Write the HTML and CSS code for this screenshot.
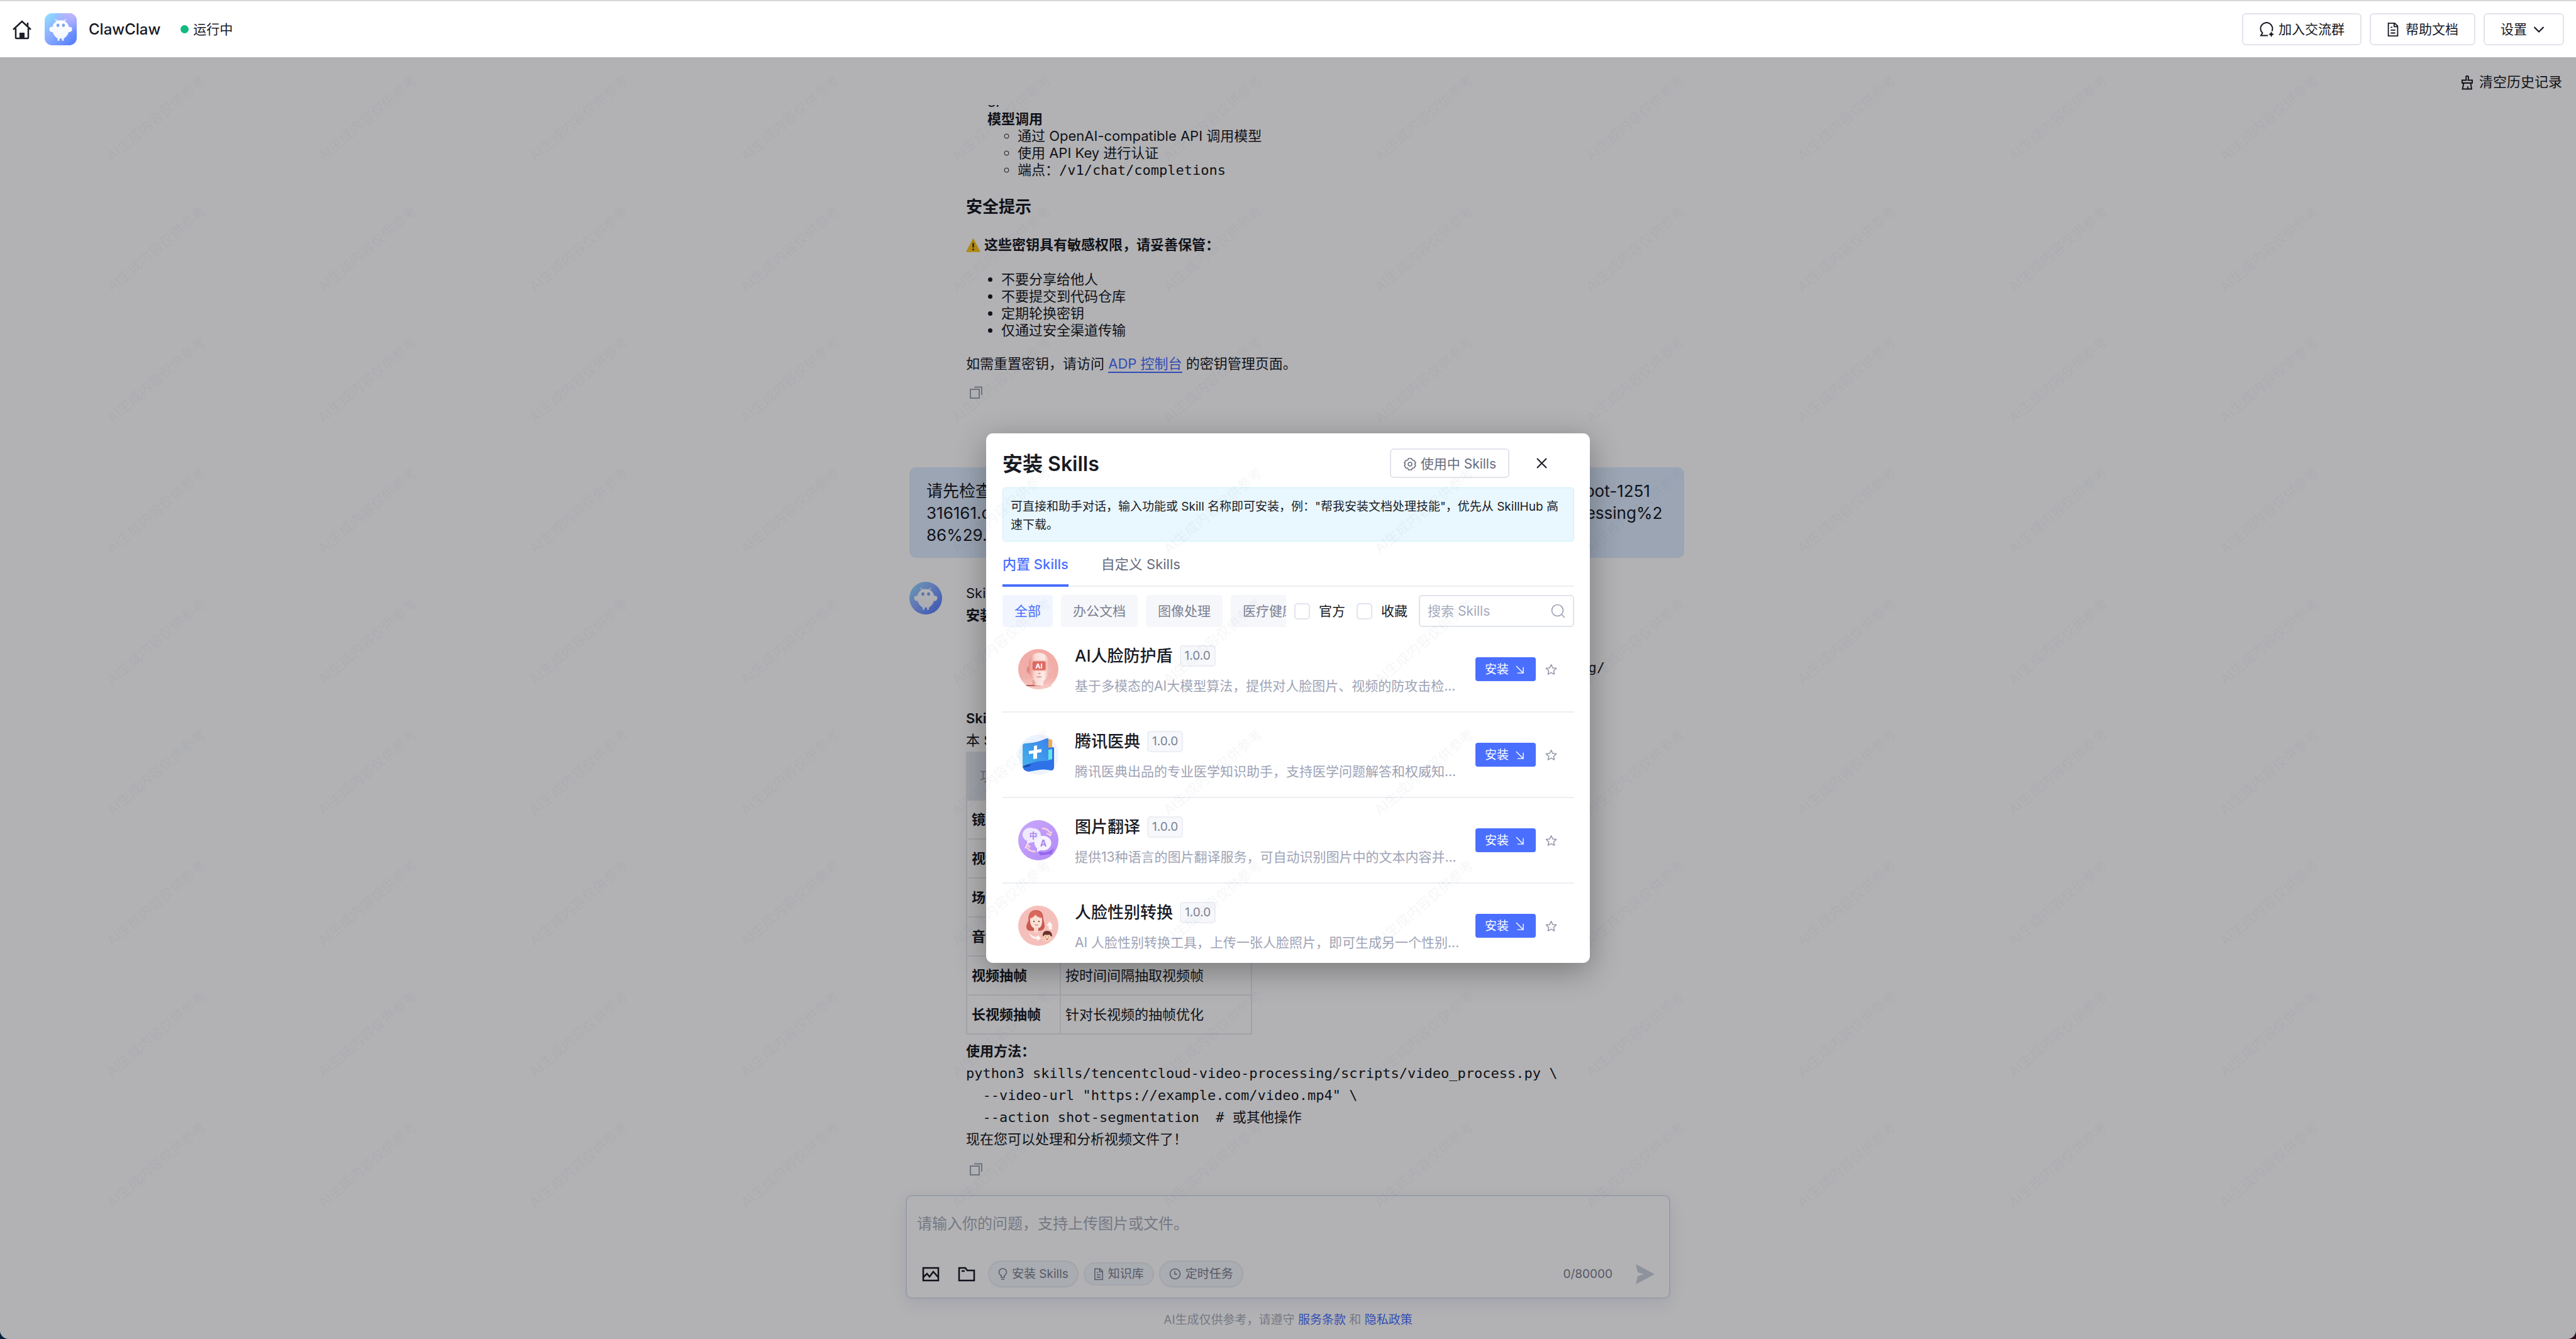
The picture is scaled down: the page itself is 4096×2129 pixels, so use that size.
FILE: index.html
```html
<!DOCTYPE html>
<html lang="zh-CN">
<head>
<meta charset="utf-8">
<title>ClawClaw</title>
<link rel="stylesheet" href="styles.css">
</head>
<body>
<svg class="defs" aria-hidden="true">
  <defs>
    <linearGradient id="logoBg" x1="0" y1="0" x2="1" y2="1"><stop offset="0" stop-color="#8fe3ff"/><stop offset=".4" stop-color="#8fb0ff"/><stop offset="1" stop-color="#4f78ff"/></linearGradient>
    <radialGradient id="logoTint" cx=".85" cy="0" r=".6"><stop offset="0" stop-color="#c3b4ff"/><stop offset="1" stop-color="#c3b4ff" stop-opacity="0"/></radialGradient>
    <linearGradient id="logoBody" x1="0" y1="0" x2="0" y2="1"><stop offset="0" stop-color="#fff"/><stop offset="1" stop-color="#f1f6ff"/></linearGradient>
    <linearGradient id="coral" x1="0" y1="0" x2="0" y2="1"><stop offset="0" stop-color="#f3aba6"/><stop offset=".7" stop-color="#f1b0aa"/><stop offset="1" stop-color="#f8cfc9"/></linearGradient>
    <linearGradient id="skin" x1="0" y1="0" x2="1" y2="0"><stop offset="0" stop-color="#e58d83"/><stop offset=".3" stop-color="#f9d9d3"/><stop offset=".75" stop-color="#fcece8"/><stop offset="1" stop-color="#eeb0a8"/></linearGradient>
    <linearGradient id="book" x1="0" y1="1" x2="1" y2="0"><stop offset="0" stop-color="#45b4ea"/><stop offset="1" stop-color="#3b82ee"/></linearGradient>
    <linearGradient id="violet" x1="0" y1="0" x2="1" y2="1"><stop offset="0" stop-color="#c9a8fb"/><stop offset="1" stop-color="#b18bf7"/></linearGradient>
    <symbol id="bot" viewBox="0 0 52 52">
      <path d="M17 10l5 3M35 10l-5 3" stroke="#e6f1ff" stroke-width="1.5" fill="none"/>
      <path d="M26 11.500c8 0 12 5 13.500 11 3-1 5 .5 5 3.500s-2.500 5-5.500 4.500c-1.500 5-5 8.500-8 10.500v3.500h-3V41h-4v3.500h-3V41c-3-2-6.500-5.500-8-10.500-3 .5-5.500-1.500-5.500-4.500s2-4.500 5-3.500c1.500-6 5.500-11 13.500-11z" fill="url(#logoBody)"/>
      <ellipse cx="21.500" cy="19.500" rx="2.300" ry="2.800" fill="#7ea6f5"/><ellipse cx="30.500" cy="19.500" rx="2.300" ry="2.800" fill="#7ea6f5"/>
    </symbol>
    <symbol id="copy" viewBox="0 0 20 20"><path d="M1 5h14v14H1zM7 1.500h12V14" fill="none" stroke="currentColor" stroke-width="2"/></symbol>
    <symbol id="doc" viewBox="0 0 20 26"><path d="M2 2h11l5 5v17H2zM12 2v6h6M6 9h3M6 14h8M6 19h8" fill="none" stroke="currentColor" stroke-width="2"/></symbol>
    <symbol id="arrow" viewBox="0 0 14 14"><path d="M1 1l11 11M13 3v10H3" fill="none" stroke="currentColor" stroke-width="1.500"/></symbol>
    <symbol id="star" viewBox="0 0 20 20"><path d="M10 1.800l2.500 5.500 6 .7-4.400 4.100 1.200 5.900L10 15.100 4.700 18l1.200-5.900L1.500 8l6-.7z" fill="none" stroke="currentColor" stroke-width="1.600" stroke-linejoin="round"/></symbol>
  </defs>
</svg>

<div class="app">
  <header class="topbar">
    <a class="home" href="#" aria-label="首页"><svg width="32" height="32" viewBox="0 0 32 32"><path d="M2 16L16 3l14 13M6 14v15q0 1 1 1h18q1 0 1-1V14M25 11V5" fill="none" stroke="#1b1d2a" stroke-width="2.500"/><path d="M12 30v-9h8v9z" fill="#1b1d2a"/></svg></a>
    <svg class="logo" width="51" height="51" viewBox="0 0 52 52"><rect width="52" height="52" rx="12" fill="url(#logoBg)"/><rect width="52" height="52" rx="12" fill="url(#logoTint)"/><use href="#bot"/></svg>
    <h1 class="brand">ClawClaw</h1>
    <span class="status"><i class="dot"></i>运行中</span>
    <nav class="top-actions">
      <button class="btn wide"><svg width="24" height="24" viewBox="0 0 24 24"><path d="M14 21.500H3l2.500-4A9.500 9.500 0 1 1 20.500 14.500" fill="none" stroke="currentColor" stroke-width="2"/><path d="M19.500 15l1.500 3 3 1.500-3 1.500-1.500 3-1.500-3-3-1.500 3-1.500z" fill="currentColor"/></svg>加入交流群</button>
      <button class="btn"><svg width="20" height="24"><use href="#doc"/></svg>帮助文档</button>
      <button class="btn tight">设置<svg width="18" height="12" viewBox="0 0 18 12"><path d="M1.500 2L9 9.500 16.500 2" fill="none" stroke="currentColor" stroke-width="2.200"/></svg></button>
    </nav>
  </header>

  <main class="stage">
    <div class="history-bar"><button class="clear"><svg width="18" height="25" viewBox="0 0 18 25"><path d="M7.500 9.500L7 4a2.200 2.200 0 0 1 4 0l-.5 5.500H17V14H1V9.500zM3.500 14L1.500 23.500H16L14.500 14M10 19.500v4" fill="none" stroke="currentColor" stroke-width="1.900"/></svg>清空历史记录</button></div>

    <div class="thread">
      <div class="thread-col">
        <article class="answer">
          <div class="numbered">3.</div>
          <div class="numbered"><b>模型调用</b></div>
          <ul class="circles"><li>通过 OpenAI-compatible API 调用模型</li><li>使用 API Key 进行认证</li><li>端点：<code>/v1/chat/completions</code></li></ul>
          <h3>安全提示</h3>
          <p class="warn"><svg width="23" height="22" viewBox="0 0 23 22"><path d="M11.500 1L22 21H1z" fill="#fdc419" stroke="#fdc419" stroke-width="1.500" stroke-linejoin="round"/><path d="M11.500 7.500v7M11.500 16.500v2.500" stroke="#222" stroke-width="2.200"/></svg><b>这些密钥具有敏感权限，请妥善保管：</b></p>
          <ul class="discs"><li>不要分享给他人</li><li>不要提交到代码仓库</li><li>定期轮换密钥</li><li>仅通过安全渠道传输</li></ul>
          <p>如需重置密钥，请访问 <a class="console" href="#">ADP 控制台</a> 的密钥管理页面。</p>
          <button class="copy first" aria-label="复制"><svg width="20" height="20"><use href="#copy"/></svg></button>
        </article>

        <div class="question">请先检查是否已安装 Skills，若未安装，请从以下地址下载并安装：https://lke-store.cos/qbot-1251<br>316161.cos.ap-guangzhou.myqcloud.com/public/docs/skills/tencentcloud-video-processing%2<br>86%29.zip</div>

        <div class="reply">
          <svg class="face" width="52" height="52" viewBox="0 0 52 52"><circle cx="26" cy="26" r="26" fill="url(#logoBg)"/><use href="#bot"/></svg>
          <article class="answer roomy">
            <p>Skill 安装成功</p>
            <p><b>安装位置：</b></p>
            <p class="path"><code>/home/node/.openclaw/workspace/skills/tencentcloud-video-processing/</code></p>
            <p><b>Skill 功能：</b></p>
            <p>本 Skill 支持以下视频处理能力</p>
            <table>
              <thead><tr><th class="name">功能</th><th>说明</th></tr></thead>
              <tbody>
                <tr><td><b>镜头分割</b></td><td>自动识别镜头切换</td></tr>
                <tr><td><b>视频标签</b></td><td>识别视频内容标签</td></tr>
                <tr><td><b>场景识别</b></td><td>识别视频中的场景</td></tr>
                <tr><td><b>音频提取</b></td><td>从视频中提取音频</td></tr>
                <tr><td><b>视频抽帧</b></td><td>按时间间隔抽取视频帧</td></tr>
                <tr><td><b>长视频抽帧</b></td><td>针对长视频的抽帧优化</td></tr>
              </tbody>
            </table>
            <p><b>使用方法：</b></p>
            <pre>python3 skills/tencentcloud-video-processing/scripts/video_process.py \
  --video-url "https://example.com/video.mp4" \
  --action shot-segmentation  # 或其他操作</pre>
            <p>现在您可以处理和分析视频文件了！</p>
            <button class="copy" aria-label="复制"><svg width="20" height="20"><use href="#copy"/></svg></button>
          </article>
        </div>
      </div>
    </div>

    <form class="composer">
      <textarea aria-label="问题" placeholder="请输入你的问题，支持上传图片或文件。"></textarea>
      <div class="tools">
        <button type="button" class="icon" aria-label="上传图片"><svg width="28" height="24" viewBox="0 0 28 24"><path d="M2 2h24v20H2zM2 17l6-6 4 5 6-8 8 9" fill="none" stroke="currentColor" stroke-width="2.500"/></svg></button>
        <button type="button" class="icon" aria-label="上传文件"><svg width="28" height="24" viewBox="0 0 28 24"><path d="M2 2h10l3 4h11v16H2zM6 7h5" fill="none" stroke="currentColor" stroke-width="2.500"/></svg></button>
        <div class="pills">
          <button type="button" class="pill"><svg width="15" height="19" viewBox="0 0 15 19"><path d="M5 15v-3Q1.500 10 1.500 6.500a6 5.500 0 0 1 12 0Q13.500 10 10 12v3zM5 18h5" fill="none" stroke="currentColor" stroke-width="1.500"/></svg>安装 Skills</button>
          <button type="button" class="pill small"><svg width="16" height="20"><use href="#doc"/></svg>知识库</button>
          <button type="button" class="pill"><svg width="19" height="19" viewBox="0 0 19 19"><circle cx="9.500" cy="9.500" r="8" fill="none" stroke="currentColor" stroke-width="1.500"/><path d="M9 5v5h4" fill="none" stroke="currentColor" stroke-width="1.500"/></svg>定时任务</button>
        </div>
        <span class="count">0/80000</span>
        <button type="submit" class="send" aria-label="发送"><svg width="30" height="32" viewBox="0 0 30 32"><path d="M0 0l30 16L0 32l3-13 10-3L3 13z" fill="#ccd1dc"/></svg></button>
      </div>
    </form>
    <footer class="legal">AI生成仅供参考，请遵守 <a href="#">服务条款</a> 和 <a href="#">隐私政策</a></footer>

    <div class="overlay">
      <section class="modal" role="dialog" aria-labelledby="modal-title">
        <div class="modal-head">
          <h2 id="modal-title">安装 Skills</h2>
          <button class="btn-used"><svg width="22" height="22" viewBox="0 0 22 22"><path d="M8.500 2h5l1 2.500 3 .5 2.500 4-1.500 2 1.500 2-2.500 4-3 .5-1 2.500h-5l-1-2.500-3-.5L2 13l1.500-2L2 9l2.500-4 3-.5z" fill="none" stroke="currentColor" stroke-width="1.600" stroke-linejoin="round"/><circle cx="11" cy="11" r="3" fill="none" stroke="currentColor" stroke-width="1.600"/></svg>使用中 Skills</button>
          <button class="close" aria-label="关闭"><svg width="17" height="17" viewBox="0 0 17 17"><path d="M1 1l15 15M16 1L1 16" stroke="currentColor" stroke-width="2"/></svg></button>
        </div>
        <p class="tip">可直接和助手对话，输入功能或 Skill 名称即可安装，例："帮我安装文档处理技能"，优先从 SkillHub 高速下载。</p>
        <div class="tabs" role="tablist"><button role="tab" aria-selected="true">内置 Skills</button><button role="tab" aria-selected="false">自定义 Skills</button></div>
        <div class="filters">
          <div class="chips"><button class="chip on">全部</button><button class="chip">办公文档</button><button class="chip">图像处理</button><button class="chip">医疗健康</button></div>
          <label class="check"><input type="checkbox">官方</label>
          <label class="check"><input type="checkbox">收藏</label>
          <div class="search"><input type="text" aria-label="搜索" placeholder="搜索 Skills"><svg width="23" height="23" viewBox="0 0 23 23"><circle cx="10.500" cy="10.500" r="9" fill="none" stroke="currentColor" stroke-width="1.700"/><path d="M17 17l5 5" stroke="currentColor" stroke-width="1.700"/></svg></div>
        </div>
        <ul class="skills">
          <li>
            <svg width="64" height="64" viewBox="0 0 64 64"><circle cx="32" cy="32" r="32" fill="url(#coral)"/><path d="M13 57l42 0q-10 7-23 7t-19-7z" fill="#f6c7c1"/><path d="M12 57h26l-3 2H14z" fill="#bb5a55"/><ellipse cx="16.500" cy="33" rx="3" ry="5.500" fill="#df8880"/><ellipse cx="49.500" cy="33" rx="2.500" ry="5.500" fill="#f0b9b2"/><path d="M23 42h20v15q-10 3-20 0z" fill="url(#skin)"/><path d="M33 6c10 0 16 7 16 17v11c0 10-7 18-13 18h-5c-7 0-14-8-14-18V23C17 13 23 6 33 6z" fill="url(#skin)"/><path d="M28 44q5-2 10 0-5 3-10 0z" fill="#e6a098"/><path d="M31 38h5l-2 2z" fill="#d87b72"/><rect x="22" y="19" width="22" height="15" rx="3" fill="#dc6a61" stroke="#efaaa3" stroke-width="1.500"/><text x="33" y="31" text-anchor="middle" class="glyph-ai">AI</text></svg>
            <div class="info"><h3>AI人脸防护盾<span class="tag">1.0.0</span></h3><p>基于多模态的AI大模型算法，提供对人脸图片、视频的防攻击检...</p></div>
            <button class="install">安装<svg width="13" height="13"><use href="#arrow"/></svg></button><button class="fav" aria-label="收藏"><svg width="19" height="19"><use href="#star"/></svg></button>
          </li>
          <li>
            <svg width="64" height="64" viewBox="0 0 64 64"><circle cx="32" cy="32" r="32" fill="#eef4ff"/><path d="M46 7l8 1v22h-8z" fill="#f5a94c"/><path d="M40 22l16-2q1 0 1 2v30q0 5-5 5-12-3-24 0l-12 2q-9-2-9-9z" fill="#2f72e8"/><path d="M46 24l8-1v16l-8 2z" fill="#63e6e0"/><path d="M7 18q0-4 4-4 20-1 34-8 3-1 3 2v34Q32 41 15 47q-6 2-8 5z" fill="url(#book)"/><path d="M7 52q2-4 14-5-2 5-14 5z" fill="#174ba9"/><path d="M25 18l5-1v7l7-1v5l-7 1v9l-6 1v-9l-7 1v-5l8-1z" fill="#fff"/></svg>
            <div class="info"><h3>腾讯医典<span class="tag">1.0.0</span></h3><p>腾讯医典出品的专业医学知识助手，支持医学问题解答和权威知...</p></div>
            <button class="install">安装<svg width="13" height="13"><use href="#arrow"/></svg></button><button class="fav" aria-label="收藏"><svg width="19" height="19"><use href="#star"/></svg></button>
          </li>
          <li>
            <svg width="64" height="64" viewBox="0 0 64 64"><circle cx="32" cy="32" r="32" fill="url(#violet)"/><path d="M32 50q16 4 25-6l-4 10-18 2z" fill="#9566ee"/><path d="M24 13a12 11 0 0 1 0 22l-6 1-4 3v-6a12 11 0 0 1 10-20z" fill="#f0eaff"/><text x="24" y="29" text-anchor="middle" class="glyph-zh">中</text><path d="M40 25a12.500 11.500 0 0 1 0 23l-5 0-5 3v-6a12.500 11.500 0 0 1 10-20z" fill="#f6f3ff"/><text x="40" y="42" text-anchor="middle" class="glyph-en">A</text><path d="M38 13q9 0 12 7M53 18l-2 6-6-3M28 50q-11 0-14-7M11 45l3-6 5 4" fill="none" stroke="#fbd3dc" stroke-width="2.500"/></svg>
            <div class="info"><h3>图片翻译<span class="tag">1.0.0</span></h3><p>提供13种语言的图片翻译服务，可自动识别图片中的文本内容并...</p></div>
            <button class="install">安装<svg width="13" height="13"><use href="#arrow"/></svg></button><button class="fav" aria-label="收藏"><svg width="19" height="19"><use href="#star"/></svg></button>
          </li>
          <li>
            <svg width="64" height="64" viewBox="0 0 64 64"><circle cx="32" cy="32" r="32" fill="#f5c0bb"/><path d="M16 22C16 12 21 7 28 7s12 4 12 14c1 6 2 8 2 12 0 4-4 7-8 7H19c-4 0-6-3-6-7 0-4 3-6 3-11z" fill="#c9584f"/><path d="M25 34h7v8q-4 2-7 0z" fill="#f8d3c8"/><path d="M19 20q6-2 8-6 4 5 11 5v7q0 10-9 10t-10-10z" fill="#fbe0d6"/><path d="M16 23q0-15 12-15 9 0 11 12-8-1-12-6-2 5-8 6-1 4-3 7z" fill="#d9695e"/><circle cx="25" cy="25" r="1.100" fill="#542720"/><circle cx="33" cy="25" r="1.100" fill="#542720"/><path d="M26.500 30q2.500 2 5 0" fill="none" stroke="#cf6a5c" stroke-width="1.200"/><path d="M17 43q6 8 14 6v-3l5 6-6 4v-3q-10 0-13-10zM49 38l-1-6-3 0 5-7 5 7-2 0 1 6z" fill="#fff6f3"/><circle cx="46" cy="50" r="7" fill="#f8cdb6"/><path d="M39 49q-1-9 7-9t8 9q-3 0-4-3-6 1-8 0-1 3-3 3z" fill="#68332a"/><path d="M43.500 49.500v1M48.500 49.500v1M44.500 53q1.500 1 3 0" stroke="#68332a" fill="none"/></svg>
            <div class="info"><h3>人脸性别转换<span class="tag">1.0.0</span></h3><p>AI 人脸性别转换工具，上传一张人脸照片，即可生成另一个性别...</p></div>
            <button class="install">安装<svg width="13" height="13"><use href="#arrow"/></svg></button><button class="fav" aria-label="收藏"><svg width="19" height="19"><use href="#star"/></svg></button>
          </li>
        </ul>
      </section>
    </div>
    <svg class="watermark" aria-hidden="true">
      <defs><pattern id="mark" width="336" height="208" patternUnits="userSpaceOnUse"><text x="178" y="166" transform="rotate(-40 178 166)">AI生成内容仅供参考</text></pattern></defs>
      <rect width="100%" height="100%" fill="url(#mark)"/>
    </svg>
  </main>
</div>
</body>
</html>
```
FILE: styles.css
```css
:root {
  --ink: #181a24;
  --sub: #7b8091;
  --faint: #9ea3b5;
  --line: #eceef3;
  --edge: #e1e4eb;
  --blue: #4a6fff;
  --mono: "DejaVu Sans Mono", "Noto Sans CJK SC", monospace;
}
* { box-sizing: border-box; }
body, h1, h2, h3, p, ul, pre { margin: 0; padding: 0; }
body {
  background: linear-gradient(90deg, #0b2140, #3c0a24);
  color: var(--ink);
  font: 22px/27px Inter, "Noto Sans CJK SC", sans-serif;
}
button, input, textarea { font: inherit; color: inherit; }
button { padding: 0; border: 0; background: none; display: inline-flex; align-items: center; justify-content: center; white-space: nowrap; }
svg { flex: none; display: block; }
a { color: var(--blue); text-decoration: none; }
ul { list-style: none; }
code, pre { font-family: var(--mono); }
b { font-weight: 600; }
.defs { position: absolute; width: 0; height: 0; }

.app { display: flex; flex-direction: column; height: 100vh; border-radius: 0 0 14px 14px; overflow: hidden; background: #fff; }

/* top bar */
.topbar { display: flex; align-items: center; flex: none; height: 91px; padding: 0 19px; border-top: 2px solid #d8d8da; }
.logo { margin: 0 19px 0 20px; }
.brand { font-size: 24px; font-weight: 500; }
.status { display: flex; align-items: center; gap: 7px; margin-left: 32px; font-size: 21px; }
.dot { width: 13px; height: 13px; border-radius: 50%; background: #10b981; }
.top-actions { display: flex; gap: 13px; margin-left: auto; font-size: 21px; }
.btn { gap: 10px; height: 51px; padding: 0 25px; border: 2px solid var(--edge); border-radius: 6px; }
.btn.wide { gap: 7px; }
.btn.tight { padding: 0 29px 0 25px; }

/* chat */
.stage { position: relative; display: flex; flex-direction: column; flex: 1; min-height: 0; }
.history-bar { display: flex; justify-content: flex-end; flex: none; height: 76px; padding: 2px 22px 0 0; }
.clear { gap: 10px; }
.thread { display: flex; flex: 1; align-items: flex-end; justify-content: center; min-height: 0; padding: 0 0 31px 28px; overflow: hidden; }
.thread-col { width: 1232px; }
.answer { margin-left: 90px; }
.numbered { padding-left: 34px; }
.circles { list-style: circle; padding-left: 82px; }
.discs { list-style: disc; padding-left: 56px; }
.answer h3 { margin: 29px 0 32px; font-size: 26px; line-height: 31px; font-weight: 600; }
.warn { display: flex; align-items: center; gap: 6px; margin-bottom: 28px; }
.discs { margin-bottom: 26px; }
.console { border-bottom: 2px solid currentColor; }
.copy { display: block; margin: 20px 0 0 6px; color: #9da5b4; }
.copy.first { margin-top: 22px; }
.question { margin: 109px 0 38px; padding: 20px 27px 19px; border-radius: 10px; background: #dfedff; font-size: 26px; line-height: 35px; white-space: nowrap; }
.reply { display: flex; gap: 38px; align-items: flex-start; }
.roomy { flex: 1; margin-left: 0; padding-top: 1px; line-height: 35px; }
.path { max-width: 1016px; margin: 48px 0 46px; text-align: right; }
table { width: 455px; height: 450px; margin-bottom: 9px; border-collapse: collapse; table-layout: fixed; }
th, td { padding: 0 7px; border: 2px solid #e8eaee; text-align: left; }
thead { height: 76px; background: #e5e9f2; color: var(--faint); }
th { padding-left: 20px; font-weight: 400; }
th.name { width: 149px; }

/* composer */
.composer { flex: none; align-self: center; width: 1216px; height: 165px; padding: 27px 23px 16px 16px; border: 2px solid #dbe1f2; border-radius: 10px; box-shadow: 0 8px 24px rgba(60, 80, 150, .1); display: flex; flex-direction: column; }
textarea { flex: 1; padding: 0; border: 0; background: none; resize: none; font-size: 24px; line-height: 34px; }
textarea::placeholder { color: #a9aebb; opacity: 1; }
.tools { display: flex; align-items: center; height: 43px; padding-left: 8px; font-size: 19px; color: var(--sub); }
.icon { margin-right: 29px; color: var(--ink); }
.icon + .icon { margin-right: 20px; }
.pills { display: flex; align-items: center; gap: 8px; }
.pill { gap: 7px; height: 43px; padding: 0 14px; border: 2px solid #e9ecf2; border-radius: 22px; background: #f3f6fa; }
.pill.small { height: 37px; }
.count { margin-left: auto; }
.send { margin-left: 37px; }
.legal { display: flex; flex: none; align-items: center; justify-content: center; height: 64px; padding-top: 2px; font-size: 19px; color: #a9aebb; white-space: pre; }

/* dialog */
.overlay { position: absolute; inset: 0; display: flex; align-items: center; justify-content: center; background: rgba(0, 0, 8, .3); }
.modal { display: flex; flex-direction: column; width: 960px; height: 842px; padding: 24px 25px 0 26px; border-radius: 11px; background: #fff; overflow: hidden; box-shadow: 0 12px 50px rgba(0, 0, 0, .32); }
.modal > * { flex: none; }
.modal-head { display: flex; align-items: center; height: 47px; padding-right: 26px; }
h2 { margin-right: auto; padding-top: 3px; font-size: 32px; line-height: 44px; font-weight: 600; }
.btn-used { gap: 6px; height: 47px; padding: 2px 19px 0; border: 2px solid var(--edge); border-radius: 6px; color: #666b7c; font-size: 21px; }
.close { width: 51px; height: 47px; margin-left: 26px; }
.tip { margin-top: 15px; padding: 15px 12px 11px; border: 1px solid #cdeefc; border-radius: 5px; background: #e9f7fe; font-size: 19px; line-height: 29px; }
.tabs { display: flex; gap: 52px; height: 72px; border-bottom: 2px solid var(--line); }
.tabs button { height: 72px; padding-top: 4px; border-bottom: 4px solid transparent; color: #666b7c; }
.tabs button[aria-selected="true"] { border-color: var(--blue); color: var(--blue); font-weight: 500; }
.filters { display: flex; align-items: center; height: 51px; margin-top: 13px; font-size: 21px; }
.chips { display: flex; flex: 1; gap: 13px; min-width: 0; margin-right: 13px; overflow: hidden; }
.chip { flex: none; height: 51px; padding: 0 19px; border-radius: 5px; background: #f6f7fa; color: var(--sub); }
.chip.on { background: #f0f5ff; color: var(--blue); }
.check { display: flex; align-items: center; gap: 14px; margin-right: 18px; }
.check input { appearance: none; width: 25px; height: 26px; margin: 0; border: 2px solid var(--edge); border-radius: 5px; background: #fff; }
.search { display: flex; align-items: center; width: 247px; height: 51px; padding: 0 12px; border: 2px solid var(--edge); border-radius: 5px; color: var(--faint); }
.search input { flex: 1; min-width: 0; padding: 0; border: 0; outline: 0; background: none; }
.search input::placeholder { color: #a5aabb; opacity: 1; }
.skills li { display: flex; align-items: center; height: 136px; padding: 0 27px 0 25px; border-bottom: 2px solid var(--line); }
.info { flex: 1; min-width: 0; margin: 0 24px 0 26px; padding-top: 3px; white-space: nowrap; }
.info h3 { display: flex; align-items: center; gap: 11px; height: 36px; margin-bottom: 14px; font-size: 26px; font-weight: 500; }
.tag { height: 34px; padding: 0 6px; border: 2px solid var(--line); border-radius: 5px; background: #f6f8fb; color: var(--sub); font-size: 19px; line-height: 30px; font-weight: 400; }
.info p { font-size: 21px; line-height: 32px; color: var(--faint); }
.install { justify-content: flex-start; gap: 11px; width: 96px; height: 38px; padding-left: 15px; border-radius: 4px; background: var(--blue); color: #fff; font-size: 19px; }
.fav { margin-left: 15px; color: #9297a8; }
.glyph-ai { font: 700 11px Inter, sans-serif; fill: #fff; }
.glyph-zh { font: 700 13px "Noto Sans CJK SC", sans-serif; fill: #ab86ee; }
.glyph-en { font: 700 14px Inter, sans-serif; fill: #ab86ee; }

.watermark { position: absolute; top: 0; left: 0; width: 100%; max-width: 3696px; height: 1872px; pointer-events: none; }
.watermark text { font: 22px Inter, "Noto Sans CJK SC", sans-serif; fill: rgba(60, 80, 110, .05); }
```
